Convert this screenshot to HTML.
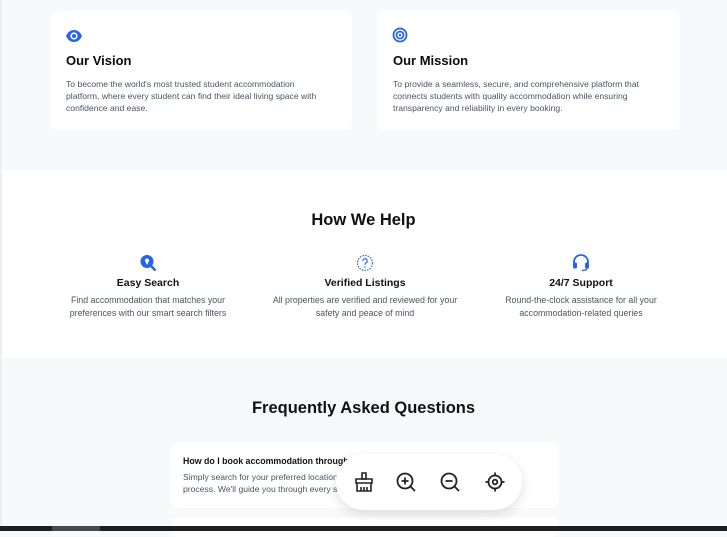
<!DOCTYPE html>
<html><head><meta charset="utf-8"><style>
*{margin:0;padding:0;box-sizing:border-box}
body{width:727px;height:531px;overflow:hidden;background:#f8f9fb;font-family:"Liberation Sans",sans-serif;position:relative;color:#111}
.edge{position:absolute;left:0;top:0;width:2px;height:526px;background:#eceef1}
.card{position:absolute;background:#fff;border-radius:8px}
h3{font-size:13px;font-weight:bold;color:#0b0b0b}
p{font-size:8.6px;line-height:12px;color:#4b5563}
.sec{position:absolute;left:2px;top:170px;width:725px;height:188px;background:#fff}
.ttl{position:absolute;width:727px;text-align:center;font-size:16.5px;font-weight:bold}
.col{position:absolute;width:220px;text-align:center}
.col h4{font-size:10.5px;font-weight:bold;margin-top:0;margin-bottom:5px}
.col p{font-size:8.8px;line-height:12.5px}
.bar{position:absolute;left:0;top:526px;width:727px;height:5px;background:#1f1f21}
.bar i{position:absolute;left:52px;top:0;width:48px;height:5px;background:#4a4a4c}
.tool{position:absolute;left:336px;top:454px;width:186px;height:56px;background:#fff;border-radius:28px;box-shadow:0 4px 12px rgba(0,0,0,.12)}
.tool svg{position:absolute;top:17px}
</style></head><body>
<div class="edge"></div>
<div class="card" style="left:50px;top:11px;width:302px;height:119px">
<svg style="position:absolute;left:15px;top:17px" width="18" height="16" viewBox="0 0 18 16"><path d="M1 8C3 3.5 6 2 9 2s6 1.5 8 6c-2 4.5-5 6-8 6S3 12.5 1 8z" fill="#2563eb"/><circle cx="9" cy="8" r="3.6" fill="#fff"/><circle cx="9" cy="8" r="2" fill="#2563eb"/></svg>
<h3 style="position:absolute;left:16px;top:42px">Our Vision</h3>
<p style="position:absolute;left:16px;top:67px;width:262px">To become the world's most trusted student accommodation platform, where every student can find their ideal living space with confidence and ease.</p>
</div>
<div class="card" style="left:377px;top:11px;width:303px;height:119px">
<svg style="position:absolute;left:15px;top:16px" width="16" height="16" viewBox="0 0 16 16"><circle cx="8" cy="8" r="6.5" fill="none" stroke="#2563eb" stroke-width="1.8"/><circle cx="8" cy="8" r="3.5" fill="none" stroke="#2563eb" stroke-width="1.8"/><circle cx="8" cy="8" r="1.2" fill="#2563eb"/></svg>
<h3 style="position:absolute;left:16px;top:42px">Our Mission</h3>
<p style="position:absolute;left:16px;top:67px;width:262px">To provide a seamless, secure, and comprehensive platform that connects students with quality accommodation while ensuring transparency and reliability in every booking.</p>
</div>
<div class="sec"></div>
<div class="ttl" style="top:211px">How We Help</div>
<div class="col" style="left:38px;top:254px">
<svg width="20" height="18" viewBox="0 0 20 18"><circle cx="9" cy="7.5" r="6.5" fill="#2563eb"/><path d="M13 12l4.5 4.5" stroke="#2563eb" stroke-width="2.4"/><circle cx="9" cy="6.5" r="2" fill="#fff"/><path d="M7.3 7.5L9 11l1.7-3.5z" fill="#fff"/></svg>
<h4>Easy Search</h4><p>Find accommodation that matches your<br>preferences with our smart search filters</p></div>
<div class="col" style="left:255px;top:254px">
<svg width="20" height="18" viewBox="0 0 20 18"><circle cx="10" cy="9" r="7.5" fill="none" stroke="#2563eb" stroke-width="1.2" stroke-dasharray="1.5 1.2"/><path d="M7.8 7a2.2 2.2 0 1 1 3 2c-.8.4-.8 1-.8 1.8" fill="none" stroke="#2563eb" stroke-width="1.1"/><circle cx="10" cy="13" r=".7" fill="#2563eb"/></svg>
<h4>Verified Listings</h4><p>All properties are verified and reviewed for your<br>safety and peace of mind</p></div>
<div class="col" style="left:471px;top:254px">
<svg width="20" height="18" viewBox="0 0 20 18"><path d="M3 10V8a7 7 0 0 1 14 0v2" fill="none" stroke="#2563eb" stroke-width="1.8"/><rect x="2" y="8.5" width="4" height="6" rx="1.5" fill="#2563eb"/><rect x="14" y="8.5" width="4" height="6" rx="1.5" fill="#2563eb"/><path d="M16 14c0 2-2 2.5-5 2.5" fill="none" stroke="#2563eb" stroke-width="1.4"/></svg>
<h4>24/7 Support</h4><p>Round-the-clock assistance for all your<br>accommodation-related queries</p></div>
<div class="ttl" style="top:399px">Frequently Asked Questions</div>
<div class="card" style="left:171px;top:442px;width:388px;height:66px">
<div style="position:absolute;left:12px;top:14px;font-size:8.8px;font-weight:bold">How do I book accommodation through our platform?</div>
<p style="position:absolute;left:12px;top:29px;width:370px">Simply search for your preferred location, browse listings and follow the simple booking<br>process. We'll guide you through every step.</p>
</div>
<div class="card" style="left:171px;top:517px;width:388px;height:20px"></div>
<div class="tool">
<svg style="left:17px" width="22" height="22" viewBox="0 0 22 22" fill="none" stroke="#222" stroke-width="1.6"><path d="M9 2h4v6H9z"/><path d="M3 8h16v4H3z"/><path d="M4 12v8h14v-8M8 16v4M11 16v4M14 16v4"/></svg>
<svg style="left:59px" width="22" height="22" viewBox="0 0 22 22" fill="none" stroke="#222" stroke-width="1.8"><circle cx="10" cy="10" r="7.5"/><path d="M15.5 15.5L20 20M10 6.5v7M6.5 10h7"/></svg>
<svg style="left:103px" width="22" height="22" viewBox="0 0 22 22" fill="none" stroke="#222" stroke-width="1.8"><circle cx="10" cy="10" r="7.5"/><path d="M15.5 15.5L20 20M6.5 10h7"/></svg>
<svg style="left:148px" width="22" height="22" viewBox="0 0 22 22" fill="none" stroke="#222" stroke-width="1.8"><circle cx="11" cy="11" r="6.5"/><circle cx="11" cy="11" r="2.3"/><path d="M11 1.5v3M11 17.5v3M1.5 11h3M17.5 11h3"/></svg>
</div>
<div class="bar"><i></i></div>
</body></html>
